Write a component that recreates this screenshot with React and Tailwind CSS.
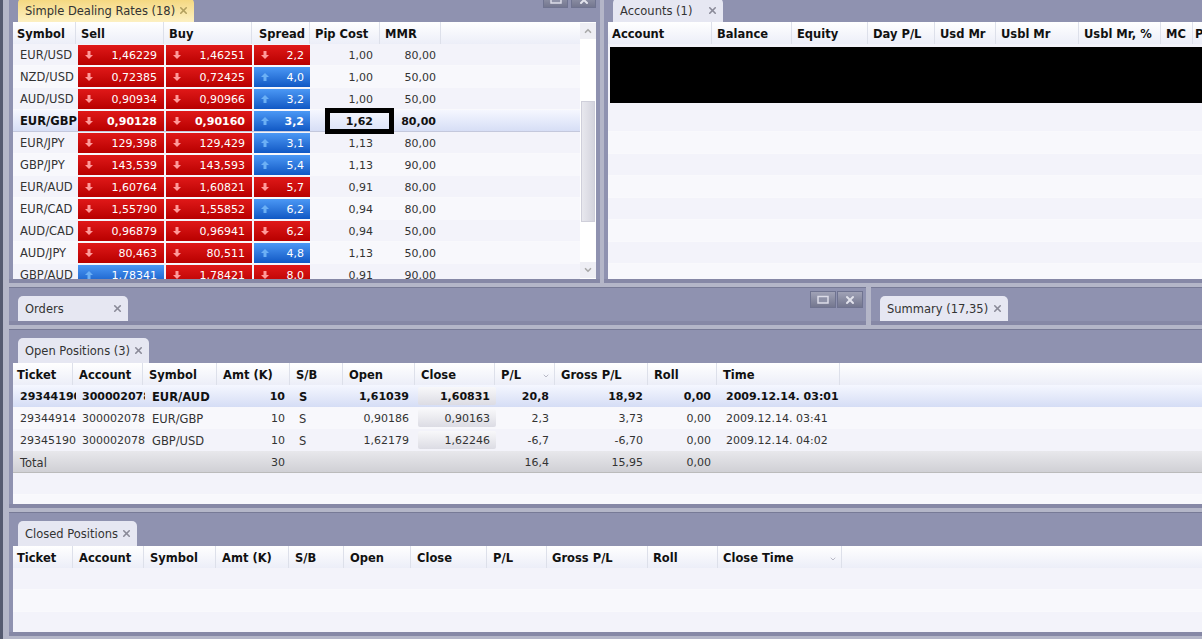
import React from 'react';
import { X, ChevronDown, ChevronUp } from 'lucide-react';

const rates = [
  ['EUR/USD', '1,46229', 'd', '1,46251', 'd', '2,2', 'd', '1,00', '80,00'],
  ['NZD/USD', '0,72385', 'd', '0,72425', 'd', '4,0', 'u', '1,00', '50,00'],
  ['AUD/USD', '0,90934', 'd', '0,90966', 'd', '3,2', 'u', '1,00', '50,00'],
  ['EUR/GBP', '0,90128', 'd', '0,90160', 'd', '3,2', 'u', '1,62', '80,00'],
  ['EUR/JPY', '129,398', 'd', '129,429', 'd', '3,1', 'u', '1,13', '80,00'],
  ['GBP/JPY', '143,539', 'd', '143,593', 'd', '5,4', 'u', '1,13', '90,00'],
  ['EUR/AUD', '1,60764', 'd', '1,60821', 'd', '5,7', 'd', '0,91', '80,00'],
  ['EUR/CAD', '1,55790', 'd', '1,55852', 'd', '6,2', 'u', '0,94', '80,00'],
  ['AUD/CAD', '0,96879', 'd', '0,96941', 'd', '6,2', 'd', '0,94', '50,00'],
  ['AUD/JPY', '80,463', 'd', '80,511', 'd', '4,8', 'u', '1,13', '50,00'],
  ['GBP/AUD', '1,78341', 'u', '1,78421', 'd', '8,0', 'd', '0,91', '90,00'],
];

const positions = [
  ['29344190', '300002078', 'EUR/AUD', '10', 'S', '1,61039', '1,60831', '20,8', '18,92', '0,00', '2009.12.14. 03:01'],
  ['29344914', '300002078', 'EUR/GBP', '10', 'S', '0,90186', '0,90163', '2,3', '3,73', '0,00', '2009.12.14. 03:41'],
  ['29345190', '300002078', 'GBP/USD', '10', 'S', '1,62179', '1,62246', '-6,7', '-6,70', '0,00', '2009.12.14. 04:02'],
];

const HeadCell = ({ w, label, sort, pad = 'pl-[5px]' }) => (
  <div className={`${w} ${pad} shrink-0 h-[22px] pt-[3px] flex items-center justify-between pr-1 border-r border-[#dde0ea] font-bold text-[#111] whitespace-nowrap overflow-hidden`}>
    <span>{label}</span>
    {sort && <ChevronDown className="w-2 h-2 text-[#9a9aaa]" />}
  </div>
);

const Tab = ({ label, active, w }) => (
  <div className={`${w} h-[25px] shrink-0 flex items-center justify-between pl-[7px] pr-[5px] rounded-t-[5px] text-[#333] ${active ? 'bg-gradient-to-b from-[#f4d67a] to-[#fdf1c4]' : 'bg-[#e6e7f2]'}`}>
    <span className="whitespace-nowrap pt-[2px]">{label}</span>
    <X className={`w-[11px] h-[11px] ${active ? 'text-[#b29f5e]' : 'text-[#8a8a98]'}`} strokeWidth={3.5} />
  </div>
);

const Arrow = ({ dir }) => (
  <svg viewBox="0 0 8 8" className={`w-2 h-2 ${dir === 'd' ? 'fill-[#ff9a9a]' : 'fill-[#6cb0f5]'}`}>
    <path d={dir === 'd' ? 'M2.5 0h3v4h2.5L4 8 0 4h2.5z' : 'M2.5 8h3V4h2.5L4 0 0 4h2.5z'} />
  </svg>
);

const Quote = ({ w, value, dir, bold }) => (
  <div className={`${w} shrink-0 h-5 mr-0.5 flex items-center justify-between pl-[7px] text-white ${bold ? 'font-bold' : ''} ${dir === 'd' ? 'bg-gradient-to-b from-[#e01818] to-[#b80000]' : 'bg-gradient-to-b from-[#4b98f5] to-[#1058c4]'}`}>
    <Arrow dir={dir} />
    <span>{value}</span>
  </div>
);

const WinButtons = ({ w, gap }) => (
  <div className={`flex ${gap}`}>
    <div className={`${w} h-[17px] flex items-center justify-center border border-[#6f7390] bg-gradient-to-b from-[#a0a2b6] to-[#74778f]`}>
      <svg viewBox="0 0 12 9" className="w-3 h-[9px] fill-[#8f92a8] stroke-[#dcdce8]">
        <rect x="1" y="1.5" width="10" height="6.5" strokeWidth="1.5" />
      </svg>
    </div>
    <div className={`${w} h-[17px] flex items-center justify-center border border-[#6f7390] bg-gradient-to-b from-[#a0a2b6] to-[#74778f]`}>
      <X className="w-3 h-3 text-[#e2e3ec]" strokeWidth={4} />
    </div>
  </div>
);

const EmptyRow = ({ i }) => <div className={`h-[22px] ${i % 2 ? 'bg-[#f8f8fc]' : 'bg-[#f3f3fa]'} shadow-[inset_0_-1px_0_#f9f9fc]`} />;

export default function App() {
  return (
    <div className="w-[1202px] h-[639px] overflow-hidden bg-[#b4b6c8] text-[11.5px] leading-none text-[#333] border-l-[3px] border-[#555a70] pl-[6px] pb-[3px] flex flex-col gap-[4px] font-['DejaVu_Sans',sans-serif]">
      <div className="h-[283px] shrink-0 flex gap-[4px]">
        <section className="w-[591px] shrink-0 h-full bg-[#8f92b0] px-1 border-b-4 border-[#8688a6] flex flex-col">
          <div className="h-[22px] shrink-0 flex items-start justify-between overflow-hidden">
            <div className="ml-[5px] -mt-[2px]"><Tab label="Simple Dealing Rates (18)" active w="w-[176px]" /></div>
            <div className="-mt-[9px]"><WinButtons w="w-[25px]" gap="gap-[3px]" /></div>
          </div>
          <div className="flex-1 bg-white flex min-h-0">
            <div className="flex-1 min-w-0 overflow-hidden">
              <div className="flex bg-gradient-to-b from-white to-[#eceef8]">
                <HeadCell w="w-[63px]" pad="pl-[4px]" label="Symbol" />
                <HeadCell w="w-[88px]" label="Sell" />
                <HeadCell w="w-[88px]" label="Buy" />
                <HeadCell w="w-[58px]" pad="pl-[7px]" label="Spread" />
                <HeadCell w="w-[70px]" label="Pip Cost" />
                <HeadCell w="w-[61px]" label="MMR" />
              </div>
              {rates.map((r, i) => {
                const sel = i === 3;
                return (
                  <div key={r[0]} className={`h-[22px] text-[11px] flex items-center ${sel ? 'font-bold text-[#111] bg-gradient-to-b from-[#f5f7ff] to-[#d5ddf5] shadow-[inset_0_-1px_0_#c4c8dc]' : i % 2 ? 'bg-[#f8f8fc]' : 'bg-[#f3f3fa] shadow-[inset_0_-1px_0_#f9f9fc]'}`}>
                    <div className="w-[65px] shrink-0 pl-[7px] pt-[2px] text-[11.5px] whitespace-nowrap overflow-hidden">{r[0]}</div>
                    <Quote w="w-[86px] pr-[7px]" value={r[1]} dir={r[2]} bold={sel} />
                    <Quote w="w-[86px] pr-[7px]" value={r[3]} dir={r[4]} bold={sel} />
                    <Quote w="w-[56px] pr-[6px]" value={r[5]} dir={r[6]} bold={sel} />
                    <div className="relative self-stretch w-[68px] shrink-0 flex items-center justify-end pr-[7px]">
                      {sel
                        ? <div className="absolute z-10 left-[13px] -top-[2px] w-[69px] h-[26px] border-[5px] border-black flex items-center justify-end pr-[16px] bg-gradient-to-b from-[#f2f4fd] to-[#dfe5f8]">{r[7]}</div>
                        : r[7]}
                    </div>
                    <div className="w-[61px] shrink-0 text-right pr-[5px]">{r[8]}</div>
                  </div>
                );
              })}
            </div>
            <div className="w-[16px] shrink-0 bg-white flex flex-col items-center pt-px">
              <div className="w-[16px] h-[16px] bg-[#eeeef4] flex items-center justify-center"><ChevronUp className="w-2.5 h-2.5 text-[#aaa]" strokeWidth={4} /></div>
              <div className="mt-[62px] w-[14px] h-[121px] bg-gradient-to-r from-[#e8e8ee] to-[#d4d4de] border border-[#cfcfda]" />
              <div className="mt-auto mb-px w-[16px] h-[16px] bg-[#eeeef4] flex items-center justify-center"><ChevronDown className="w-2.5 h-2.5 text-[#aaa]" strokeWidth={4} /></div>
            </div>
          </div>
        </section>
        <section className="flex-1 min-w-0 h-full bg-[#8f92b0] pl-1 border-b-4 border-[#8688a6] flex flex-col">
          <div className="h-[22px] shrink-0 overflow-hidden pl-[5px]">
            <div className="-mt-[2px]"><Tab label="Accounts (1)" w="w-[110px]" /></div>
          </div>
          <div className="flex-1 bg-[#f6f6fb] min-h-0 overflow-hidden">
            <div className="flex bg-gradient-to-b from-white to-[#eceef8]">
              <HeadCell w="w-[104px]" pad="pl-[4px]" label="Account" />
              <HeadCell w="w-[80px]" label="Balance" />
              <HeadCell w="w-[76px]" label="Equity" />
              <HeadCell w="w-[67px]" label="Day P/L" />
              <HeadCell w="w-[61px]" label="Usd Mr" />
              <HeadCell w="w-[83px]" label="Usbl Mr" />
              <HeadCell w="w-[82px]" label="Usbl Mr, %" />
              <HeadCell w="w-[32px]" label="MC" />
              <HeadCell w="w-[40px]" pad="pl-[2px]" label="P/L" />
            </div>
            <div className="pt-[3px] pb-[7px] pl-[2px] bg-[#f3f3fa]">
              <div className="h-[56px] bg-black" />
            </div>
            {[0, 1, 2, 3, 4, 5, 6, 7].map((i) => <EmptyRow key={i} i={i} />)}
          </div>
        </section>
      </div>
      <div className="h-[38px] shrink-0 flex gap-[5px]">
        <section className="w-[857px] shrink-0 bg-[#8f92b0] border-t border-b-4 border-t-[#777a96] border-b-[#8688a6] pl-[9px] flex items-end justify-between">
          <Tab label="Orders" w="w-[110px]" />
          <div className="self-start mt-[3px] mr-[3px]"><WinButtons w="w-[26px]" gap="gap-px" /></div>
        </section>
        <section className="flex-1 min-w-0 bg-[#8f92b0] border-t border-b-4 border-t-[#777a96] border-b-[#8688a6] pl-[9px] flex items-end">
          <Tab label="Summary (17,35)" w="w-[128px]" />
        </section>
      </div>
      <section className="h-[179px] shrink-0 bg-[#8f92b0] border-t border-b-4 border-t-[#777a96] border-b-[#8688a6] pl-1 flex flex-col">
        <div className="h-[33px] shrink-0 pl-[5px] flex items-end"><Tab label="Open Positions (3)" w="w-[131px]" /></div>
        <div className="flex-1 bg-[#f6f6fb] min-h-0 overflow-hidden">
          <div className="flex bg-gradient-to-b from-white to-[#eceef8]">
            <HeadCell w="w-[60px]" pad="pl-[4px]" label="Ticket" />
            <HeadCell w="w-[70px]" pad="pl-[6px]" label="Account" />
            <HeadCell w="w-[74px]" pad="pl-[6px]" label="Symbol" />
            <HeadCell w="w-[73px]" pad="pl-[6px]" label="Amt (K)" />
            <HeadCell w="w-[53px]" pad="pl-[6px]" label="S/B" />
            <HeadCell w="w-[72px]" pad="pl-[6px]" label="Open" />
            <HeadCell w="w-[80px]" pad="pl-[6px]" label="Close" />
            <HeadCell w="w-[60px]" pad="pl-[6px]" label="P/L" sort />
            <HeadCell w="w-[93px]" pad="pl-[6px]" label="Gross P/L" />
            <HeadCell w="w-[69px]" pad="pl-[6px]" label="Roll" />
            <HeadCell w="w-[123px]" pad="pl-[6px]" label="Time" />
          </div>
          {positions.map((p, i) => (
            <div key={p[0]} className={`h-[22px] text-[11px] flex items-center ${i === 0 ? 'font-bold text-[#111] bg-gradient-to-b from-[#f5f7ff] to-[#d5ddf5]' : i === 1 ? 'bg-[#f8f8fc]' : 'bg-[#f3f3fa]'}`}>
              <div className="w-[63px] shrink-0 pl-[7px] pt-[1px] whitespace-nowrap overflow-hidden">{p[0]}</div>
              <div className="w-[69px] shrink-0 pl-[6px] pt-[1px] whitespace-nowrap overflow-hidden">{p[1]}</div>
              <div className="w-[72px] shrink-0 pl-[7px] pt-[3px] text-[11.5px]">{p[2]}</div>
              <div className="w-[73px] shrink-0 text-right pr-[5px] pt-[1px]">{p[3]}</div>
              <div className="w-[53px] shrink-0 pl-[9px] pt-[3px] text-[11.5px]">{p[4]}</div>
              <div className="w-[72px] shrink-0 text-right pr-[6px] pt-[1px]">{p[5]}</div>
              <div className="w-[83px] shrink-0 pl-[3px] pr-[2px]">
                <div className="h-[18px] pt-[1px] flex items-center justify-end pr-[6px] rounded-[2px] bg-gradient-to-b from-[#f8f8fa] to-[#dcdce4]">{p[6]}</div>
              </div>
              <div className="w-[57px] shrink-0 text-right pr-[6px] pt-[1px]">{p[7]}</div>
              <div className="w-[93px] shrink-0 text-right pr-[5px] pt-[1px]">{p[8]}</div>
              <div className="w-[69px] shrink-0 text-right pr-[6px] pt-[1px]">{p[9]}</div>
              <div className="shrink-0 pl-[9px] pt-[1px] whitespace-nowrap">{p[10]}</div>
            </div>
          ))}
          <div className="h-[22px] text-[11px] flex items-center shadow-[inset_0_-1px_0_#bbb] bg-gradient-to-b from-[#e8e8ec] to-[#cfcfd4]">
            <div className="w-[204px] shrink-0 pl-[7px] pt-[3px] text-[11.5px]">Total</div>
            <div className="w-[73px] shrink-0 text-right pr-[5px] pt-[1px]">30</div>
            <div className="w-[208px] shrink-0" />
            <div className="w-[57px] shrink-0 text-right pr-[6px] pt-[1px]">16,4</div>
            <div className="w-[93px] shrink-0 text-right pr-[5px] pt-[1px]">15,95</div>
            <div className="w-[69px] shrink-0 text-right pr-[6px] pt-[1px]">0,00</div>
          </div>
          <EmptyRow i={0} />
          <EmptyRow i={1} />
        </div>
      </section>
      <section className="flex-1 min-h-0 bg-[#8f92b0] border-t border-b-4 border-t-[#777a96] border-b-[#8688a6] pl-1 flex flex-col">
        <div className="h-[33px] shrink-0 pl-[5px] flex items-end"><Tab label="Closed Positions" w="w-[119px]" /></div>
        <div className="flex-1 bg-[#f6f6fb] min-h-0 overflow-hidden">
          <div className="flex bg-gradient-to-b from-white to-[#eceef8]">
            <HeadCell w="w-[60px]" pad="pl-[4px]" label="Ticket" />
            <HeadCell w="w-[71px]" pad="pl-[6px]" label="Account" />
            <HeadCell w="w-[72px]" pad="pl-[6px]" label="Symbol" />
            <HeadCell w="w-[73px]" pad="pl-[6px]" label="Amt (K)" />
            <HeadCell w="w-[55px]" pad="pl-[6px]" label="S/B" />
            <HeadCell w="w-[67px]" pad="pl-[6px]" label="Open" />
            <HeadCell w="w-[76px]" pad="pl-[6px]" label="Close" />
            <HeadCell w="w-[60px]" pad="pl-[6px]" label="P/L" />
            <HeadCell w="w-[101px]" pad="pl-[5px]" label="Gross P/L" />
            <HeadCell w="w-[70px]" pad="pl-[5px]" label="Roll" />
            <HeadCell w="w-[124px]" pad="pl-[5px]" label="Close Time" sort />
          </div>
          {[0, 1, 2].map((i) => <EmptyRow key={i} i={i} />)}
        </div>
      </section>
    </div>
  );
}
